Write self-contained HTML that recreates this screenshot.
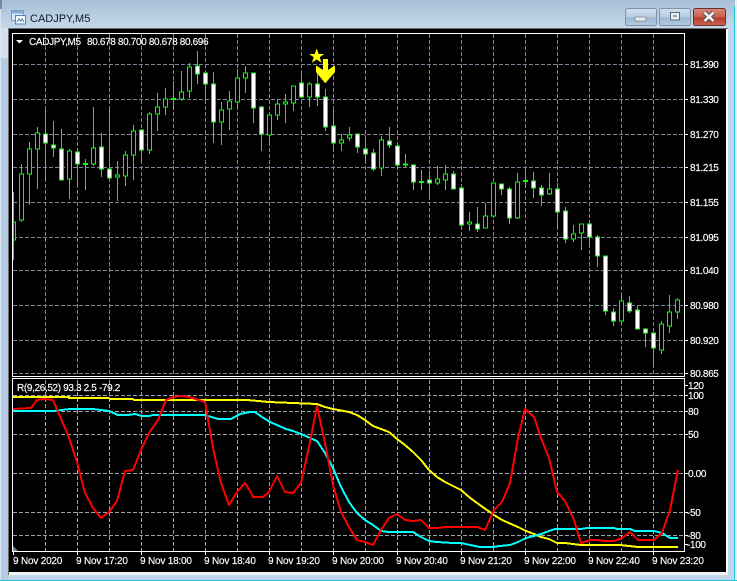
<!DOCTYPE html>
<html><head><meta charset="utf-8"><style>
html,body{margin:0;padding:0;background:#b9cfe6;width:737px;height:581px;overflow:hidden}
svg{display:block}
text{font-family:"Liberation Sans",sans-serif;font-size:10px;fill:#fff}
.a text{letter-spacing:-.35px;stroke:#fff;stroke-width:.15px}
.x text{letter-spacing:-.2px;stroke:#fff;stroke-width:.15px}
</style></head><body>
<svg width="737" height="581" viewBox="0 0 737 581" xmlns="http://www.w3.org/2000/svg">
<defs>
<linearGradient id="t" x1="0" y1="0" x2="0" y2="1"><stop offset="0" stop-color="#a6bfd7"/><stop offset="1" stop-color="#c6d9ea"/></linearGradient>
<linearGradient id="b" x1="0" y1="0" x2="0" y2="1"><stop offset="0" stop-color="#cfe0f0"/><stop offset=".5" stop-color="#b5cce2"/><stop offset=".55" stop-color="#9db8d2"/><stop offset="1" stop-color="#b4cde4"/></linearGradient>
<linearGradient id="r" x1="0" y1="0" x2="0" y2="1"><stop offset="0" stop-color="#d98a7a"/><stop offset=".5" stop-color="#c9604f"/><stop offset=".55" stop-color="#b43a28"/><stop offset="1" stop-color="#cc6650"/></linearGradient>
</defs>
<!-- window frame -->
<rect width="737" height="581" fill="#c0d5ea"/>
<rect width="737" height="29" fill="url(#t)"/>
<rect x="0" y="0" width="1" height="581" fill="#dde6ef"/>
<rect x="0" y="0" width="2" height="9" fill="#7a8896"/>
<rect x="735" y="0" width="2" height="581" fill="#e6eef5"/>
<rect x="734" y="6" width="1" height="575" fill="#1fc5d5"/>
<rect x="0" y="580" width="737" height="1" fill="#1fc5d5"/>
<rect x="1" y="28" width="7" height="30" fill="#d4e1ee"/>
<rect x="1" y="58" width="7" height="522" fill="#b4cbe4"/>
<rect x="8" y="28" width="720" height="547" fill="#6c6c6c"/>
<rect x="726" y="29" width="2" height="546" fill="#fff"/>
<rect x="9" y="572" width="719" height="3" fill="#f2f2f2"/>
<!-- icon -->
<rect x="11.500" y="10.500" width="12" height="10" fill="#dbe8f5" stroke="#6f9ac8"/>
<rect x="11.500" y="10.500" width="12" height="3" fill="#7fa8d4"/>
<rect x="15.500" y="15.500" width="10" height="8.500" fill="#f2f7fc" stroke="#4d86c4"/>
<path d="M17 22l2-3 1.500 2 1.500-2 2 3" fill="none" stroke="#3d78b8"/>
<text x="30" y="22" style="font-size:11px;fill:#0e1a28">CADJPY,M5</text>
<!-- buttons -->
<rect x="625.500" y="8.500" width="31" height="17" rx="2" fill="url(#b)" stroke="#7e92a8"/>
<rect x="635" y="17" width="11" height="4" fill="#e8eaec" stroke="#6a7480" stroke-width=".6"/>
<rect x="659.500" y="8.500" width="31" height="17" rx="2" fill="url(#b)" stroke="#7e92a8"/>
<rect x="670.500" y="12.500" width="9" height="7.500" fill="#e8eef4" stroke="#5e6a78"/>
<rect x="673" y="15" width="4" height="2" fill="#8da4bc" />
<rect x="693.500" y="8.500" width="32" height="17" rx="2" fill="url(#r)" stroke="#6a3030"/>
<path d="M704.500 12.500l9 8.500M713.500 12.500l-9 8.500" stroke="#3c3f48" stroke-width="4.500"/>
<path d="M704.500 12.500l9 8.500M713.500 12.500l-9 8.500" stroke="#f0f0f0" stroke-width="2.800"/>
<!-- chart -->
<rect x="9" y="29" width="717" height="543" fill="#000"/>
<g fill="none" stroke="#778899" stroke-dasharray="4 2" shape-rendering="crispEdges">
<path d="M45.500 34V376M77.500 34V376M109.500 34V376M141.500 34V376M173.500 34V376M205.500 34V376M237.500 34V376M269.500 34V376M301.500 34V376M333.500 34V376M365.500 34V376M397.500 34V376M429.500 34V376M461.500 34V376M493.500 34V376M525.500 34V376M557.500 34V376M589.500 34V376M621.500 34V376M653.500 34V376"/>
<path d="M13 64.500H684M13 99.500H684M13 134.500H684M13 167.500H684M13 202.500H684M13 237.500H684M13 270.500H684M13 305.500H684M13 340.500H684M13 373.500H684"/>
<path stroke="#98a2ac" d="M45.500 380V551M77.500 380V551M109.500 380V551M141.500 380V551M173.500 380V551M205.500 380V551M237.500 380V551M269.500 380V551M301.500 380V551M333.500 380V551M365.500 380V551M397.500 380V551M429.500 380V551M461.500 380V551M493.500 380V551M525.500 380V551M557.500 380V551M589.500 380V551M621.500 380V551M653.500 380V551"/>
<path stroke="#98a2ac" d="M13 395.500H684M13 411.500H684M13 434.500H684M13 473.500H684M13 512.500H684M13 535.500H684"/>
</g>
<!-- candles -->
<g shape-rendering="crispEdges" stroke="#00ff00">
<path fill="none" d="M13.500 192V260M21.500 164V222M29.500 142V205M37.500 127V189M45.500 110V180M53.500 121V157M61.500 129V180M69.500 149V199M77.500 152V186M85.500 159V190M93.500 107V166M101.500 133V177M109.500 109V179M117.500 161V201M125.500 151V186M133.500 125V180M141.500 129V161M149.500 112V154M157.500 93V131M165.500 88V115M173.500 81V110M181.500 71V101M189.500 63V98M197.500 51V84M205.500 73V101M213.500 72V143M221.500 102V145M229.500 91V130M237.500 69V108M245.500 66V93M253.500 73V123M261.500 106V151M269.500 115V142M277.500 99V120M285.500 94V123M293.500 86V111M301.500 73V98M309.500 82V107M317.500 73V106M325.500 89V131M333.500 110V150M341.500 134V151M349.500 127V141M357.500 134V153M365.500 135V162M373.500 149V171M381.500 136V176M389.500 127V148M397.500 146V166M405.500 154V167M413.500 164V190M421.500 170V190M429.500 171V197M437.500 166V185M445.500 165V190M453.500 171V189M461.500 188V229M469.500 212V231M477.500 207V232M485.500 203V228M493.500 183V216M501.500 184V195M509.500 187V224M517.500 173V219M525.500 169V188M533.500 172V198M541.500 185V206M549.500 173V195M557.500 183V228M565.500 207V243M573.500 225V242M581.500 224V250M589.500 224V247M597.500 235V267M605.500 256V315M613.500 308V326M621.500 295V324M629.500 296V313M637.500 306V329M645.500 328V347M653.500 333V364M661.500 321V354M669.500 295V333M677.500 298V319"/>
<!-- hollow -->
<path fill="#000" d="M13.500 222h2v18h-2zM19.500 174h4v46h-4zM27.500 149h4v25h-4zM35.500 133h4v16h-4zM67.500 151h4v28h-4zM115.500 175h4v2h-4zM91.500 148h4v16h-4zM123.500 155h4v21h-4zM131.500 131h4v24h-4zM147.500 114h4v36h-4zM155.500 107h4v7h-4zM163.500 99h4v8h-4zM179.500 92h4v7h-4zM187.500 67h4v24h-4zM219.500 110h4v12h-4zM227.500 101h4v8h-4zM235.500 78h4v24h-4zM243.500 73h4v5h-4zM267.500 115h4v20h-4zM275.500 104h4v11h-4zM283.500 102h4v2h-4zM291.500 86h4v17h-4zM307.500 84h4v13h-4zM339.500 140h4v3h-4zM347.500 135h4v3h-4zM379.500 140h4v28h-4zM435.500 179h4v4h-4zM443.500 174h4v6h-4zM467.500 222h4v2h-4zM483.500 216h4v12h-4zM491.500 183h4v33h-4zM515.500 182h4v36h-4zM547.500 189h4v5h-4zM571.500 234h4v5h-4zM579.500 224h4v9h-4zM619.500 301h4v20h-4zM659.500 324h4v26h-4zM667.500 312h4v14h-4zM675.500 300h4v12h-4z"/>
<!-- white -->
<path fill="#fff" d="M43.500 134h4v9h-4zM51.500 145h4v3h-4zM59.500 149h4v31h-4zM75.500 152h4v12h-4zM99.500 147h4v22h-4zM107.500 169h4v9h-4zM139.500 130h4v20h-4zM195.500 66h4v8h-4zM203.500 73h4v11h-4zM211.500 84h4v38h-4zM251.500 73h4v35h-4zM259.500 107h4v27h-4zM299.500 83h4v14h-4zM315.500 84h4v13h-4zM323.500 97h4v30h-4zM331.500 126h4v17h-4zM355.500 134h4v13h-4zM363.500 149h4v5h-4zM371.500 153h4v16h-4zM387.500 141h4v4h-4zM395.500 146h4v19h-4zM411.500 165h4v17h-4zM427.500 180h4v3h-4zM451.500 174h4v15h-4zM459.500 188h4v37h-4zM475.500 224h4v5h-4zM499.500 184h4v5h-4zM507.500 189h4v29h-4zM531.500 181h4v7h-4zM539.500 188h4v7h-4zM555.500 189h4v23h-4zM563.500 211h4v28h-4zM587.500 224h4v13h-4zM595.500 237h4v19h-4zM603.500 256h4v55h-4zM611.500 312h4v9h-4zM627.500 303h4v8h-4zM635.500 310h4v19h-4zM643.500 329h4v4h-4zM651.500 333h4v15h-4z"/>
<!-- doji -->
<path fill="none" stroke-width="2" d="M83 164h5M171 99h5M403 164.500h5M419 182h5M523 181h5"/>
</g>
<!-- frames -->
<g fill="none" stroke="#fff" shape-rendering="crispEdges">
<path d="M12.500 377V33.500H684.500V377"/>
<path d="M12.500 376.500H684.500"/>
<path d="M12.500 378.500H684.500V551.500H12.500Z"/>
<path d="M685 64.500h3M685 99.500h3M685 134.500h3M685 167.500h3M685 202.500h3M685 237.500h3M685 270.500h3M685 305.500h3M685 340.500h3M685 373.500h3M685 385.500h3M685 395.500h3M685 411.500h3M685 434.500h3M685 473.500h3M685 512.500h3M685 535.500h3M685 544.500h3"/>
<path d="M13.500 552v3M77.500 552v3M141.500 552v3M205.500 552v3M269.500 552v3M333.500 552v3M397.500 552v3M461.500 552v3M525.500 552v3M589.500 552v3M653.500 552v3"/>
</g>
<path d="M13 546l5 5h-5z" fill="#778899"/>
<!-- indicator lines -->
<g fill="none" stroke-width="2" stroke-linejoin="round" shape-rendering="crispEdges">
<polyline stroke="#ffff00" points="13,397 69,397 69,398 109,398 110,399 133,399 134,400 247,400 269,402 293,403 317,404 325,407 333,409 349,412 357,415 365,420 373,426 381,429 389,432 397,439 405,445 413,452 421,460 429,470 437,477 445,482 461,490 469,497 477,503 487,510 494,515 502,520 518,527 526,531 534,534 541,537 549,539 557,543 565,543 581,545 620,545 638,547 678,547"/>
<polyline stroke="#00ffff" points="13,411 53,411 70,409 93,409 109,411 118,415 128,415 135,414 142,416 149,416 153,415 205,415 218,419 231,419 240,414 250,412 255,412 262,417 270,422 286,429 293,431 301,434 317,441 325,453 333,468 341,487 349,502 357,513 365,520 373,525 381,531 389,532 413,532 421,537 429,541 437,542 453,543 461,543 470,545 480,547 493,547 500,546 510,545 518,542 526,538 534,536 541,534 549,531 555,529 581,529 587,528 614,528 617,529 630,529 635,531 654,531 662,533 670,538 678,538"/>
<polyline stroke="#ff0000" points="13,409 31,408 37,400 43,399 53,400 68,435 77,462 85,493 93,508 101,518 109,512 117,501 125,471 133,470 141,450 149,433 158,420 166,400 173,397 182,396 189,397 205,402 213,448 221,483 229,505 237,492 245,483 250,491 253,497 263,497 269,492 277,476 285,492 293,493 301,483 309,447 317,406 325,443 333,485 341,512 349,527 357,540 365,542 373,545 381,530 389,518 397,514 405,520 413,521 421,520 429,528 437,528 445,527 477,527 485,530 494,510 502,502 510,483 518,438 525,409 534,417 541,438 549,458 557,492 565,501 574,520 581,543 590,540 598,540 606,541 614,541 622,538 630,532 638,540 654,540 662,533 670,510 678,470"/>
</g>
<!-- star + arrow -->
<path d="M316.700 48.500l2 5.500h5.500l-4.500 3.300 1.800 5.500-4.800-3.300-4.800 3.300 1.800-5.500-4.500-3.300h5.500z" fill="#ffff00"/>
<path d="M323 59h5v11l6-4h1v6l-9.500 11h-.5l-9-11v-6h1l6 4z" fill="#ffff00"/>
<!-- labels -->
<path d="M16 40h7l-3.500 3.500z" fill="#fff"/>
<g class="a">
<text x="29" y="45">CADJPY,M5</text>
<text x="87" y="45">80.678 80.700 80.678 80.696</text>
<text x="17" y="391">R(9,26,52) 93.3 2.5 -79.2</text>
<text x="690" y="68">81.390</text>
<text x="690" y="103">81.330</text>
<text x="690" y="138">81.270</text>
<text x="690" y="171">81.215</text>
<text x="690" y="206">81.155</text>
<text x="690" y="241">81.095</text>
<text x="690" y="274">81.040</text>
<text x="690" y="309">80.980</text>
<text x="690" y="344">80.920</text>
<text x="690" y="377">80.865</text>
<text x="688" y="389">120</text>
<text x="688" y="399">100</text>
<text x="688" y="415">80</text>
<text x="688" y="438">50</text>
<text x="688" y="477">0.00</text>
<text x="687" y="516">-50</text>
<text x="687" y="539">-80</text>
<text x="687" y="548">-100</text>
</g>
<g class="x">
<text x="13" y="564">9 Nov 2020</text>
<text x="76" y="564">9 Nov 17:20</text>
<text x="140" y="564">9 Nov 18:00</text>
<text x="204" y="564">9 Nov 18:40</text>
<text x="268" y="564">9 Nov 19:20</text>
<text x="332" y="564">9 Nov 20:00</text>
<text x="396" y="564">9 Nov 20:40</text>
<text x="460" y="564">9 Nov 21:20</text>
<text x="524" y="564">9 Nov 22:00</text>
<text x="588" y="564">9 Nov 22:40</text>
<text x="652" y="564">9 Nov 23:20</text>
</g>
</svg>
</body></html>
